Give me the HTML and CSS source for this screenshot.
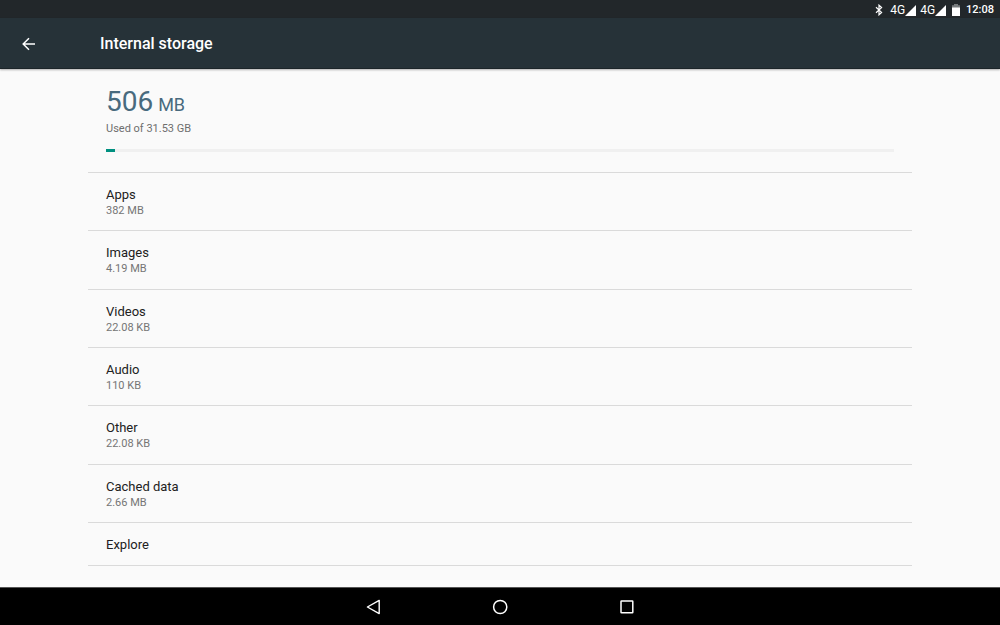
FILE: index.html
```html
<!DOCTYPE html>
<html lang="en">
<head>
<meta charset="utf-8">
<meta name="viewport" content="width=device-width, initial-scale=1">
<title>Internal storage</title>
<link rel="stylesheet" href="styles.css">
</head>
<body>
<div class="status-bar">
  <svg class="bluetooth" width="8" height="12" viewBox="0 0 8 12" aria-label="Bluetooth"><path d="M1 3.2L6.6 8.4L4 10.8V1.2L6.6 3.6L1 8.8" fill="none" stroke="currentColor" stroke-width="1.2"/></svg>
  <span class="network">4G<svg width="11" height="11" viewBox="0 0 11 11" aria-hidden="true"><path d="M11 0V11H0z" fill="currentColor"/></svg></span>
  <span class="network">4G<svg width="11" height="11" viewBox="0 0 11 11" aria-hidden="true"><path d="M11 0V11H0z" fill="currentColor"/></svg></span>
  <svg class="battery" width="8" height="12" viewBox="0 0 8 12" aria-label="Battery"><path d="M0 1.2H2V0H6V1.2H8V4H0z" fill="#777b7d"/><path d="M0 3.5H8V12H0z" fill="currentColor"/></svg>
  <time class="clock">12:08</time>
</div>
<header class="app-bar">
  <button class="back" type="button" aria-label="Back"><svg width="14" height="14" viewBox="0 0 14 14"><path d="M13 7H1.5M7 1.2L1.2 7L7 12.8" fill="none" stroke="currentColor" stroke-width="1.5"/></svg></button>
  <h1 class="title">Internal storage</h1>
</header>
<main class="content">
  <section class="summary">
    <p class="used">506 <span class="unit">MB</span></p>
    <label class="capacity" for="usage">Used of 31.53 GB</label>
    <progress class="usage" id="usage" value="11" max="1000"></progress>
  </section>
  <ul class="list">
    <li class="item"><button class="row" type="button"><span class="name">Apps</span><span class="size">382 MB</span></button></li>
    <li class="item"><button class="row" type="button"><span class="name">Images</span><span class="size">4.19 MB</span></button></li>
    <li class="item"><button class="row" type="button"><span class="name">Videos</span><span class="size">22.08 KB</span></button></li>
    <li class="item"><button class="row" type="button"><span class="name">Audio</span><span class="size">110 KB</span></button></li>
    <li class="item"><button class="row" type="button"><span class="name">Other</span><span class="size">22.08 KB</span></button></li>
    <li class="item"><button class="row" type="button"><span class="name">Cached data</span><span class="size">2.66 MB</span></button></li>
    <li class="item item-single"><button class="row" type="button"><span class="name">Explore</span></button></li>
  </ul>
</main>
<nav class="nav-bar">
  <button class="nav-button" type="button" aria-label="Back"><svg width="16" height="16" viewBox="0 0 16 16"><path d="M14.2 1.4V14.6L2.4 8z" fill="none" stroke="currentColor" stroke-width="1.4" stroke-linejoin="round"/></svg></button>
  <button class="nav-button" type="button" aria-label="Home"><svg width="16" height="16" viewBox="0 0 16 16"><circle cx="8.2" cy="8" r="6.6" fill="none" stroke="currentColor" stroke-width="1.5"/></svg></button>
  <button class="nav-button" type="button" aria-label="Recent apps"><svg width="16" height="16" viewBox="0 0 16 16"><rect x="2" y="2" width="11.8" height="11.8" rx="0.5" fill="none" stroke="currentColor" stroke-width="1.5"/></svg></button>
</nav>
</body>
</html>
```
FILE: styles.css
```css
* {
  box-sizing: border-box;
}

body {
  display: flex;
  flex-direction: column;
  min-height: 100vh;
  margin: 0;
  background: #fafafa;
  color: #212121;
  font-family: Roboto, "Liberation Sans", sans-serif;
}

button {
  padding: 0;
  border: 0;
  background: none;
  color: inherit;
  font: inherit;
}

svg {
  display: block;
}

.status-bar {
  display: flex;
  align-items: center;
  justify-content: flex-end;
  height: 18px;
  padding: 2px 6px 0;
  background: #22272a;
  color: #fff;
  font-size: 12px;
  line-height: 16px;
}

.bluetooth {
  margin-right: 7px;
}

.network {
  display: flex;
  align-items: center;
  margin-right: 4px;
}

.battery {
  margin: 0 6px 0 2px;
}

.clock {
  font-size: 11px;
  font-weight: 500;
}

.app-bar {
  z-index: 1;
  display: flex;
  align-items: center;
  height: 51px;
  padding: 2px 0 0 22px;
  border-bottom: 1px solid #1c2529;
  background: #263238;
  box-shadow: 0 1px 2px rgba(0, 0, 0, 0.3);
  color: #fff;
}

.back {
  width: 78px;
}

.title {
  margin: 0;
  font-size: 16px;
  font-weight: 500;
  line-height: 20px;
}

.content {
  display: flex;
  flex: 1;
  flex-direction: column;
  padding: 0 88px 21px;
}

.summary {
  display: flex;
  flex-direction: column;
  height: 103px;
  padding: 17px 18px 0;
}

.used {
  margin: 0;
  color: #486a7e;
  font-size: 28px;
  line-height: 32px;
}

.unit {
  margin-left: -2px;
  font-size: 18px;
}

.capacity {
  color: #6e6e6e;
  font-size: 11px;
  line-height: 16px;
}

.usage {
  width: 100%;
  height: 3px;
  margin-top: 12px;
  border: 0;
  background: #f0f0f0;
  appearance: none;
}

.usage::-webkit-progress-bar {
  background: #f0f0f0;
}

.usage::-webkit-progress-value {
  background: #009080;
}

.list {
  display: flex;
  flex: 1;
  flex-direction: column;
  margin: 0;
  padding: 0;
  border-top: 1px solid #dadada;
  list-style: none;
}

.item {
  display: flex;
  flex: 1 0 58px;
  border-bottom: 1px solid #dadada;
}

.item-single {
  flex: 0 0 43px;
}

.row {
  display: flex;
  flex: 1;
  flex-direction: column;
  justify-content: center;
  padding: 3px 18px 0;
  text-align: left;
}

.name {
  font-size: 13px;
  line-height: 16px;
}

.size {
  color: #757575;
  font-size: 11px;
  line-height: 16px;
}

.nav-bar {
  display: flex;
  align-items: center;
  justify-content: center;
  gap: 111px;
  height: 38px;
  border-top: 1px solid #555;
  background: #000;
  color: #fff;
}

.nav-button {
  width: 16px;
  height: 16px;
}
```
